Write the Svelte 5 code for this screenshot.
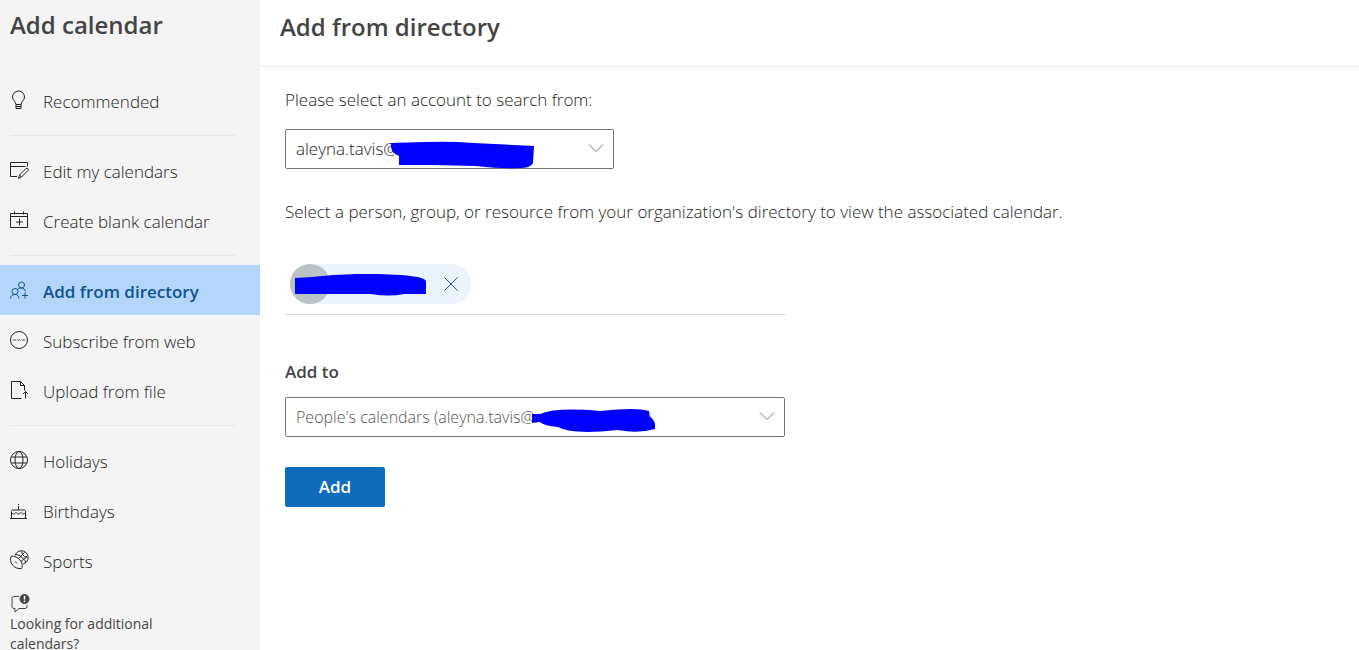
<script lang="ts">
	type Item = { id: string; label: string };

	const groups: Item[][] = [
		[{ id: 'bulb', label: 'Recommended' }],
		[
			{ id: 'edit', label: 'Edit my calendars' },
			{ id: 'create', label: 'Create blank calendar' }
		],
		[
			{ id: 'directory', label: 'Add from directory' },
			{ id: 'web', label: 'Subscribe from web' },
			{ id: 'file', label: 'Upload from file' }
		],
		[
			{ id: 'globe', label: 'Holidays' },
			{ id: 'cake', label: 'Birthdays' },
			{ id: 'sports', label: 'Sports' }
		]
	];

	let active = $state('directory');
	let hasPerson = $state(true);

	const gap = '\u00a0'.repeat(27);
</script>

{#snippet icon(id: string)}
	<svg class="icon" viewBox="0 0 20 20" aria-hidden="true">
		{#if id === 'bulb'}
			<path d="M7 14.5c0-3-3.5-4-3.5-7.5a6 6 0 0 1 12 0c0 3.500-3.500 4.500-3.500 7.500zM7 14.500v4h5v-4M7 16.500h5" />
		{:else if id === 'edit'}
			<path d="M8 16.500H1.500v-14h17v4M1.500 6.500h15" />
			<path d="M9.500 18.500l1-3.500 6.500-6.500c1.500-1 3 .5 2 2L12.500 17zM10.500 15l2 2" />
		{:else if id === 'create'}
			<path d="M1.500 3.500h17v14h-17zM1.500 6.500h17M5.500 1.500v3M14.500 1.500v3M10.500 8.500v7M7 12h7" />
		{:else if id === 'directory'}
			<circle cx="12.500" cy="5" r="3" />
			<circle cx="6" cy="11.500" r="3" />
			<path d="M1.500 18.500c0-2.500 2-4 4.500-4s4 1.500 4 4M8.500 9.500C9.500 8.500 11 8 12.500 8c2 0 3.500 1.500 4 3.500M16 12.500v6M13 15.500h6" />
		{:else if id === 'web'}
			<circle cx="10" cy="10" r="8.500" />
			<path d="M4 9.500l1 1 1-1 1 1M8.500 9.500l1 1 1-1 1 1M13 9.500l1 1 1-1 1 1" />
		{:else if id === 'file'}
			<path d="M12.500 18.500H2.500v-17h9l4 4v5M11.500 1.500v4h4M16.500 18.500v-7M14 14l2.500-2.500L19 14" />
		{:else if id === 'globe'}
			<circle cx="10" cy="10" r="8.500" />
			<ellipse cx="10" cy="10" rx="4" ry="8.500" />
			<path d="M2.500 7h15M2.500 13h15" />
		{:else if id === 'cake'}
			<path d="M1 18.500h17M2.500 18.500v-7c0-1 .5-1.500 1.500-1.500h11c1 0 1.500.5 1.500 1.500v7M2.500 12.500c1.500 2 3 2 4.500 0 1.500 2 3.500 2 5 0 1.500 2 3 2 4.500 0M9.500 6v4M9.500 4v1" />
		{:else if id === 'sports'}
			<path d="M6 5.500a6.700 6.700 0 1 1 8 8.500" />
			<path d="M2 6.500C5 5.500 9 7.500 11 10s3 6.500 1.500 8.500C9 19 5.500 17.500 3.500 15S1 8.500 2 6.500zM6 11.500l2 2" />
			<path d="M9.500 8.500l6-6M12 11.500l6-5M7 4.500l4 1 5 5 .5 2.500M12.500 1.500l1 3 2 2 3 .5" />
		{/if}
	</svg>
{/snippet}

{#snippet chevron()}
	<svg class="chevron" viewBox="0 0 16 10" aria-hidden="true">
		<path d="M1 1.500l7 7 7-7" />
	</svg>
{/snippet}

<div class="app">
	<aside class="sidebar">
		<h1>Add calendar</h1>
		<nav aria-label="Add calendar">
			{#each groups as group}
				<ul>
					{#each group as item (item.id)}
						<li>
							<button
								class="nav-item"
								class:active={active === item.id}
								aria-current={active === item.id ? 'page' : undefined}
								onclick={() => (active = item.id)}
							>
								{@render icon(item.id)}
								<span>{item.label}</span>
							</button>
						</li>
					{/each}
				</ul>
			{/each}
		</nav>
		<a class="feedback" href="#feedback">
			<svg class="icon" viewBox="0 0 20 20" aria-hidden="true">
				<path d="M9 3.500H4a2 2 0 0 0-2 2v8a2 2 0 0 0 2 2h1V19l4-3.500h6a2 2 0 0 0 2-2V12" />
				<circle class="solid" cx="14.500" cy="6" r="4.500" />
				<path class="mark" d="M14.500 3v3.500M14.500 7.500v1.500" />
			</svg>
			<span>Looking for additional calendars?</span>
		</a>
	</aside>

	<main>
		<header>
			<h2>Add from directory</h2>
		</header>
		<form class="content" onsubmit={(e) => e.preventDefault()}>
			<label for="account">Please select an account to search from:</label>
			<div class="select-box account">
				<select id="account">
					<option>aleyna.tavis@</option>
				</select>
				{@render chevron()}
				<svg class="scribble" viewBox="0 0 144 28" aria-hidden="true">
					<path d="M1 2L35 1Q60 0 84 2L144 5L143 22Q141 27 130 27Q112 28 86 25L40 24H9V15Q0 12 1 2z" />
				</svg>
			</div>

			<p id="directory-hint">
				Select a person, group, or resource from your organization's directory to view the associated calendar.
			</p>
			<div class="people" aria-labelledby="directory-hint" role="group">
				{#if hasPerson}
					<div class="chip">
						<span class="avatar"></span>
						<button type="button" class="remove" aria-label="Remove" onclick={() => (hasPerson = false)}>
							<svg viewBox="0 0 14 14" aria-hidden="true"><path d="M.5.5l13 13M13.500.5l-13 13" /></svg>
						</button>
						<svg class="scribble" viewBox="0 0 132 22" aria-hidden="true">
							<path d="M0 4L17 3Q60-2 106 1Q132 3 131 8V20H109Q94 23 76 20H0z" />
						</svg>
					</div>
				{/if}
			</div>

			<label class="strong" for="target">Add to</label>
			<div class="select-box target">
				<select id="target">
					<option>People's calendars (aleyna.tavis@{gap})</option>
				</select>
				{@render chevron()}
				<svg class="scribble" viewBox="0 0 124 25" aria-hidden="true">
					<path d="M0 6H8Q25-1 68 3Q105-1 117 3V8Q123 12 123 17V21Q106 26 86 22Q40 27 26 19Q12 18 8 14L0 15z" />
				</svg>
			</div>
			<button class="submit" type="submit">Add</button>
		</form>
	</main>
</div>

<style>
	:global(body) {
		margin: 0;
	}

	.app {
		display: flex;
		height: 100vh;
		overflow: hidden;
		background: #fff;
		color: #222;
		font-family: "Segoe UI", "Open Sans", "Noto Sans", sans-serif;
		font-size: 17px;
		font-weight: 300;
		line-height: 24px;
	}

	button,
	select {
		font: inherit;
		color: inherit;
	}

	svg {
		fill: none;
		stroke: currentColor;
	}

	h1,
	h2 {
		margin: 0;
		color: #444;
		font-size: 24px;
		font-weight: 600;
		line-height: 32px;
	}

	.sidebar {
		flex: 0 0 260px;
		overflow: hidden;
		background: #f4f4f4;
	}

	h1 {
		padding: 9px 10px 34px;
	}

	ul {
		margin: 0;
		padding: 0;
		list-style: none;
	}

	ul + ul::before {
		content: "";
		display: block;
		height: 1px;
		margin: 10px 25px 9px 10px;
		background: #e6e6e6;
	}

	.nav-item {
		display: flex;
		align-items: center;
		gap: 14px;
		width: 100%;
		height: 50px;
		padding: 4px 9px 0;
		border: 0;
		background: none;
		text-align: left;
		cursor: pointer;
	}

	.nav-item.active {
		background: #b4d6fd;
		color: #0f548c;
		font-weight: 600;
	}

	.icon {
		flex: none;
		width: 20px;
		height: 20px;
	}

	.nav-item .icon {
		margin-bottom: 4px;
	}

	.solid {
		fill: currentColor;
	}

	.mark {
		stroke: #fff;
		stroke-width: 1.500;
	}

	.feedback {
		display: flex;
		flex-direction: column;
		gap: 1px;
		width: 180px;
		padding: 8px 10px;
		color: #444;
		font-size: 14px;
		font-weight: 400;
		line-height: 20px;
		text-decoration: none;
	}

	main {
		flex: 1;
		min-width: 0;
	}

	header {
		padding: 11px 20px 23px;
		border-bottom: 1px solid #edebe9;
	}

	.content {
		padding: 21px 25px;
	}

	label,
	p {
		display: block;
		margin: 0;
	}

	.select-box {
		position: relative;
		height: 40px;
	}

	.account {
		max-width: 329px;
		margin: 17px 0 31px;
	}

	.target {
		max-width: 500px;
		margin: 13px 0 30px;
		color: #555;
		font-size: 16px;
	}

	select {
		box-sizing: border-box;
		width: 100%;
		height: 100%;
		padding: 0 40px 0 10px;
		border: 1px solid #767676;
		border-radius: 2px;
		background: #fff;
		appearance: none;
	}

	.chevron {
		position: absolute;
		top: 14px;
		right: 10px;
		width: 16px;
		height: 10px;
		color: #767676;
		pointer-events: none;
	}

	.scribble {
		position: absolute;
		fill: #00f;
		stroke: none;
		pointer-events: none;
	}

	.account .scribble {
		top: 12px;
		left: 105px;
		width: 144px;
	}

	.target .scribble {
		top: 11px;
		left: 247px;
		width: 124px;
	}

	.people {
		display: flex;
		box-sizing: border-box;
		max-width: 500px;
		min-height: 91px;
		padding: 40px 5px 10px;
		margin-bottom: 45px;
		border-bottom: 1px solid #d6d6d6;
	}

	.chip {
		position: relative;
		display: flex;
		justify-content: space-between;
		width: 181px;
		height: 40px;
		border-radius: 20px;
		background: #ebf3fc;
	}

	.avatar {
		width: 40px;
		border-radius: 50%;
		background: #b9c3c6;
	}

	.remove {
		width: 40px;
		padding: 0;
		border: 0;
		background: none;
		color: #0f548c;
		cursor: pointer;
	}

	.remove svg {
		display: block;
		width: 14px;
		height: 14px;
		margin: 0 auto;
	}

	.chip .scribble {
		top: 10px;
		left: 5px;
		width: 132px;
	}

	.strong {
		color: #444;
		font-weight: 600;
	}

	.submit {
		display: block;
		width: 100px;
		height: 40px;
		padding: 0;
		border: 0;
		border-radius: 2px;
		background: #0f6cbd;
		color: #fff;
		font-weight: 600;
		cursor: pointer;
	}
</style>
